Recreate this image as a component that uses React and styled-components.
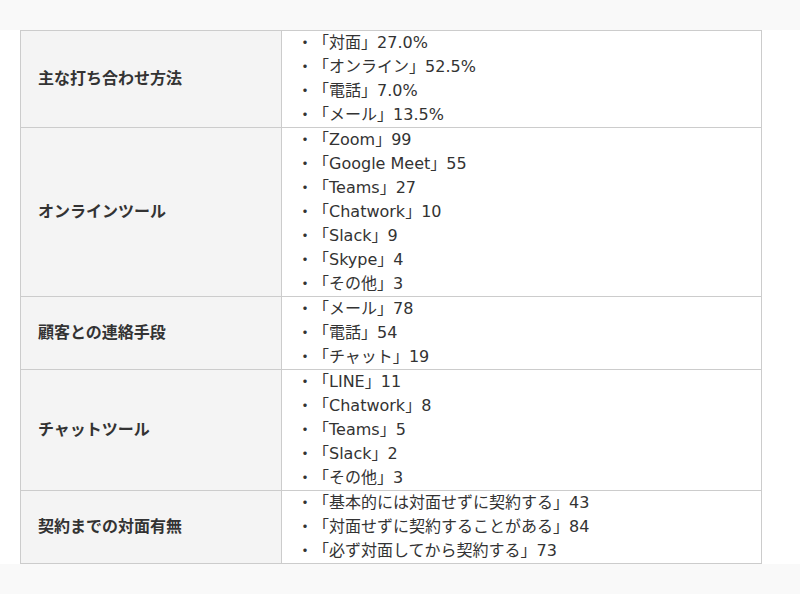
import styled, { createGlobalStyle } from 'styled-components'

const GlobalStyle = createGlobalStyle`
  body {
    margin: 0;
    background: #fff;
    font-family: "DejaVu Sans", "Noto Sans CJK JP", sans-serif;
    color: #333;
    text-spacing-trim: space-all;
  }
`

const rows = [
  {
    label: '主な打ち合わせ方法',
    items: [
      ['対面', '27.0%'],
      ['オンライン', '52.5%'],
      ['電話', '7.0%'],
      ['メール', '13.5%'],
    ],
  },
  {
    label: 'オンラインツール',
    items: [
      ['Zoom', '99'],
      ['Google Meet', '55'],
      ['Teams', '27'],
      ['Chatwork', '10'],
      ['Slack', '9'],
      ['Skype', '4'],
      ['その他', '3'],
    ],
  },
  {
    label: '顧客との連絡手段',
    items: [
      ['メール', '78'],
      ['電話', '54'],
      ['チャット', '19'],
    ],
  },
  {
    label: 'チャットツール',
    items: [
      ['LINE', '11'],
      ['Chatwork', '8'],
      ['Teams', '5'],
      ['Slack', '2'],
      ['その他', '3'],
    ],
  },
  {
    label: '契約までの対面有無',
    items: [
      ['基本的には対面せずに契約する', '43'],
      ['対面せずに契約することがある', '84'],
      ['必ず対面してから契約する', '73'],
    ],
  },
]

function App() {
  return (
    <>
      <GlobalStyle />
      <Band />
      <Section>
        <Table>
          <tbody>
            {rows.map((row) => (
              <tr key={row.label}>
                <Label>{row.label}</Label>
                <Value>
                  {row.items.map(([name, count]) => (
                    <Item key={name}>
                      <Mark>・「</Mark>
                      {name}
                      <Mark>」</Mark>
                      {count}
                    </Item>
                  ))}
                </Value>
              </tr>
            ))}
          </tbody>
        </Table>
      </Section>
      <Band $tall />
    </>
  )
}

const Band = styled.div`
  height: ${(p) => (p.$tall ? '31px' : '30px')};
  background: #f9f9f9;
`

const Section = styled.div`
  padding: 0 38px 0 20px;
`

const Table = styled.table`
  width: 742px;
  border-collapse: collapse;
  font-size: 16px;
`

const Label = styled.th`
  width: 226px;
  padding: 0 17px;
  background: #f4f4f4;
  border: 1px solid #ccc;
  text-align: left;
  font-weight: bold;
  line-height: 24px;
  color: #333;
`

const Value = styled.td`
  padding: 0 0 0 15px;
  border: 1px solid #ccc;
  background: #fff;
`

const Item = styled.div`
  height: 24px;
  line-height: 24px;
  color: #333;
  white-space: nowrap;
`

const Mark = styled.span`
  font-family: "Noto Sans CJK JP", sans-serif;
  line-height: 1;
`

export default App
